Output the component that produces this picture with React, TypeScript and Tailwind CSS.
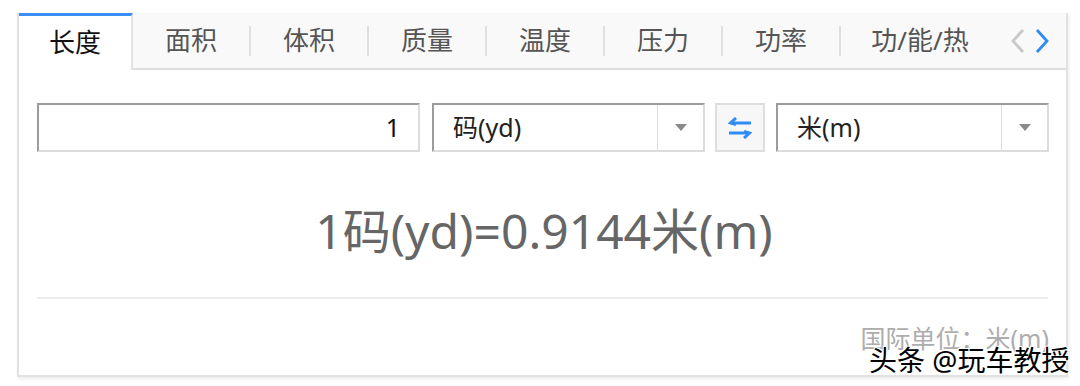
import React from "react";

const FONT = { fontFamily: '"Microsoft YaHei", "Noto Sans", "Noto Sans CJK SC", sans-serif' };

const TABS = ["面积", "体积", "质量", "温度", "压力", "功率", "功/能/热"];

function Caret() {
  return (
    <svg width="12" height="7" viewBox="0 0 12 7">
      <path d="M0 0 L12 0 L6 7 Z" fill="#8a8a8a" />
    </svg>
  );
}

function UnitSelect({ label }: { label: string }) {
  return (
    <div className="flex h-[49px] w-[273px] border-2 border-t-[#9c9c9c] border-l-[#9c9c9c] border-r-[#dcdcdc] border-b-[#dcdcdc] bg-white">
      <div className="flex flex-1 items-center pl-[19px] text-[25px] text-[#222]">{label}</div>
      <div className="flex w-[46px] items-center justify-center border-l border-[#dcdcdc]">
        <Caret />
      </div>
    </div>
  );
}

function SwapIcon() {
  return (
    <svg width="24" height="22" viewBox="0 0 24 22" fill="none" stroke="#2f8cf5" strokeWidth="3">
      <path d="M23 6 H3" />
      <path d="M8 1 L2.5 6 L8 7.5" strokeLinejoin="miter" />
      <path d="M1 16 H21" />
      <path d="M16 14.5 L21.5 16 L16 21" strokeLinejoin="miter" />
    </svg>
  );
}

export default function App() {
  return (
    <div className="relative h-[386px] w-[1080px] overflow-hidden bg-white pl-[17px] pt-[13px]" style={FONT}>
      <div className="flex h-[364px] w-[1051px] flex-col border-x-2 border-b-2 border-[#e2e2e2] bg-white shadow-[1px_2px_3px_rgba(0,0,0,0.08)]">
        {/* tab bar */}
        <div className="flex h-[57px] border-b-2 border-[#dedede] bg-[#f9f9f9]">
          <div className="-mb-[2px] flex w-[114px] items-center justify-center border-t-[3px] border-r-2 border-t-[#3a8ef6] border-r-[#e2e2e2] bg-white pb-[2px] text-[26px] text-[#111]">
            长度
          </div>
          {TABS.map((t, i) => (
            <div key={t} className="flex items-center">
              {i > 0 && <div className="h-[30px] w-[2px] bg-[#e0e0e0]" />}
              <div
                className={
                  i === TABS.length - 1
                    ? "flex w-[158px] items-center justify-center text-[26px] text-[#555]"
                    : "flex w-[116px] items-center justify-center text-[26px] text-[#555]"
                }
              >
                {t}
              </div>
            </div>
          ))}
          <div className="ml-auto mr-[16px] flex items-center gap-[10px]">
            <svg width="15" height="26" viewBox="0 0 15 26" fill="none" strokeWidth="2.8">
              <path d="M13 2 L3 13 L13 24" stroke="#c8c8c8" />
            </svg>
            <svg width="15" height="26" viewBox="0 0 15 26" fill="none" strokeWidth="2.8">
              <path d="M2 2 L12 13 L2 24" stroke="#2f8cf5" />
            </svg>
          </div>
        </div>

        {/* inputs */}
        <div className="mt-[33px] flex items-center pl-[18px]">
          <div className="flex h-[49px] w-[383px] items-center justify-end border-2 border-t-[#9c9c9c] border-l-[#9c9c9c] border-r-[#dcdcdc] border-b-[#dcdcdc] bg-white pr-[18px] text-[25px] text-[#111]">
            1
          </div>
          <div className="ml-[12px]">
            <UnitSelect label="码(yd)" />
          </div>
          <div className="ml-[10px] flex h-[49px] w-[50px] items-center justify-center border-2 border-[#dedede] bg-[#f7f7f7]">
            <SwapIcon />
          </div>
          <div className="ml-[11px]">
            <UnitSelect label="米(m)" />
          </div>
        </div>

        {/* result */}
        <div className="mt-[51px] flex justify-center pl-[3px] text-[48px] leading-[56px] text-[#666]">
          1码(yd)=0.9144米(m)
        </div>

        <div className="mx-[18px] mt-[38px] h-[2px] bg-[#ececec]" />

        <div className="mr-[17px] mt-[24px] text-right text-[25px] leading-[30px] text-[#adadad]">国际单位：米(m)</div>
      </div>

      {/* watermark lies over the card */}
      <div
        className="absolute left-[869px] top-[343px] text-[28px] leading-[34px] text-black"
        style={{ textShadow: "1px 1px 0 #fff, -1px -1px 0 #fff, 1px -1px 0 #fff, -1px 1px 0 #fff" }}
      >
        头条 @玩车教授
      </div>
    </div>
  );
}
